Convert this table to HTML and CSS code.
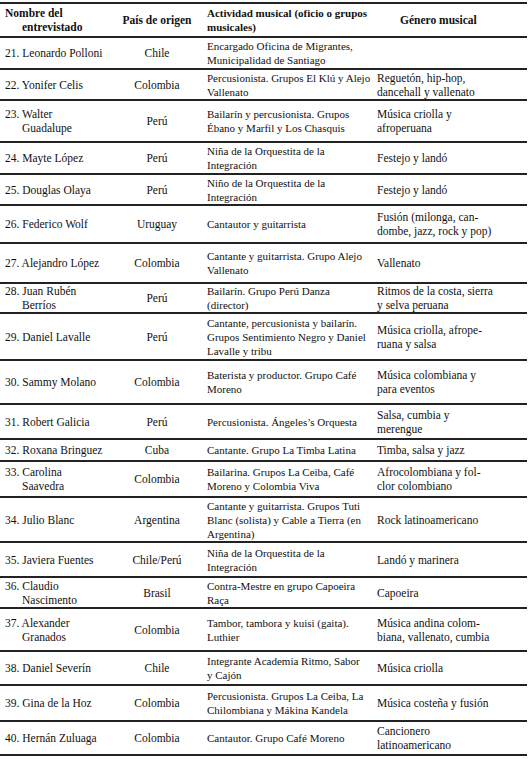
FILE: index.html
```html
<!DOCTYPE html>
<html lang="es">
<head>
<meta charset="utf-8">
<title>Entrevistados</title>
<link rel="stylesheet" href="styles.css">
</head>
<body>
<div class="table">
  <div class="row head h34">
    <div class="name">Nombre del<br>entrevistado</div>
    <div class="country">País de origen</div>
    <div class="act">Actividad musical (oficio o grupos<br>musicales)</div>
    <div class="genre genre-head">Género musical</div>
  </div>
  <div class="row h32">
    <div class="name">21. Leonardo Polloni</div>
    <div class="country">Chile</div>
    <div class="act">Encargado Oficina de Migrantes,<br>Municipalidad de Santiago</div>
    <div class="genre"></div>
  </div>
  <div class="row h31">
    <div class="name">22. Yonifer Celis</div>
    <div class="country">Colombia</div>
    <div class="act">Percusionista. Grupos El Klú y Alejo<br>Vallenato</div>
    <div class="genre">Reguetón, hip-hop,<br>dancehall y vallenato</div>
  </div>
  <div class="row h42">
    <div class="name">23. Walter<br>Guadalupe</div>
    <div class="country">Perú</div>
    <div class="act">Bailarín y percusionista. Grupos<br>Ébano y Marfil y Los Chasquis</div>
    <div class="genre">Música criolla y<br>afroperuana</div>
  </div>
  <div class="row h32">
    <div class="name">24. Mayte López</div>
    <div class="country">Perú</div>
    <div class="act">Niña de la Orquestita de la<br>Integración</div>
    <div class="genre">Festejo y landó</div>
  </div>
  <div class="row h31">
    <div class="name">25. Douglas Olaya</div>
    <div class="country">Perú</div>
    <div class="act">Niño de la Orquestita de la<br>Integración</div>
    <div class="genre">Festejo y landó</div>
  </div>
  <div class="row h38">
    <div class="name">26. Federico Wolf</div>
    <div class="country">Uruguay</div>
    <div class="act">Cantautor y guitarrista</div>
    <div class="genre">Fusión (milonga, can-<br>dombe, jazz, rock y pop)</div>
  </div>
  <div class="row h40">
    <div class="name">27. Alejandro López</div>
    <div class="country">Colombia</div>
    <div class="act">Cantante y guitarrista. Grupo Alejo<br>Vallenato</div>
    <div class="genre">Vallenato</div>
  </div>
  <div class="row h30">
    <div class="name">28. Juan Rubén<br>Berríos</div>
    <div class="country">Perú</div>
    <div class="act">Bailarín. Grupo Perú Danza<br>(director)</div>
    <div class="genre">Ritmos de la costa, sierra<br>y selva peruana</div>
  </div>
  <div class="row h47">
    <div class="name">29. Daniel Lavalle</div>
    <div class="country">Perú</div>
    <div class="act">Cantante, percusionista y bailarín.<br>Grupos Sentimiento Negro y Daniel<br>Lavalle y tribu</div>
    <div class="genre">Música criolla, afrope-<br>ruana y salsa</div>
  </div>
  <div class="row h44">
    <div class="name">30. Sammy Molano</div>
    <div class="country">Colombia</div>
    <div class="act">Baterista y productor. Grupo Café<br>Moreno</div>
    <div class="genre">Música colombiana y<br>para eventos</div>
  </div>
  <div class="row h35">
    <div class="name">31. Robert Galicia</div>
    <div class="country">Perú</div>
    <div class="act">Percusionista. Ángeles’s Orquesta</div>
    <div class="genre">Salsa, cumbia y<br>merengue</div>
  </div>
  <div class="row h22">
    <div class="name">32. Roxana Bringuez</div>
    <div class="country">Cuba</div>
    <div class="act">Cantante. Grupo La Timba Latina</div>
    <div class="genre">Timba, salsa y jazz</div>
  </div>
  <div class="row h36">
    <div class="name">33. Carolina<br>Saavedra</div>
    <div class="country">Colombia</div>
    <div class="act">Bailarina. Grupos La Ceiba, Café<br>Moreno y Colombia Viva</div>
    <div class="genre">Afrocolombiana y fol-<br>clor colombiano</div>
  </div>
  <div class="row h45">
    <div class="name">34. Julio Blanc</div>
    <div class="country">Argentina</div>
    <div class="act">Cantante y guitarrista. Grupos Tuti<br>Blanc (solista) y Cable a Tierra (en<br>Argentina)</div>
    <div class="genre">Rock latinoamericano</div>
  </div>
  <div class="row h35">
    <div class="name">35. Javiera Fuentes</div>
    <div class="country">Chile/Perú</div>
    <div class="act">Niña de la Orquestita de la<br>Integración</div>
    <div class="genre">Landó y marinera</div>
  </div>
  <div class="row h31">
    <div class="name">36. Claudio<br>Nascimento</div>
    <div class="country">Brasil</div>
    <div class="act">Contra-Mestre en grupo Capoeira<br>Raça</div>
    <div class="genre">Capoeira</div>
  </div>
  <div class="row h43">
    <div class="name">37. Alexander<br>Granados</div>
    <div class="country">Colombia</div>
    <div class="act">Tambor, tambora y kuisi (gaita).<br>Luthier</div>
    <div class="genre">Música andina colom-<br>biana, vallenato, cumbia</div>
  </div>
  <div class="row h34">
    <div class="name">38. Daniel Severín</div>
    <div class="country">Chile</div>
    <div class="act">Integrante Academia Ritmo, Sabor<br>y Cajón</div>
    <div class="genre">Música criolla</div>
  </div>
  <div class="row h36">
    <div class="name">39. Gina de la Hoz</div>
    <div class="country">Colombia</div>
    <div class="act">Percusionista. Grupos La Ceiba, La<br>Chilombiana y Mákina Kandela</div>
    <div class="genre">Música costeña y fusión</div>
  </div>
  <div class="row h34">
    <div class="name">40. Hernán Zuluaga</div>
    <div class="country">Colombia</div>
    <div class="act">Cantautor. Grupo Café Moreno</div>
    <div class="genre">Cancionero<br>latinoamericano</div>
  </div>
</div>
</body>
</html>
```

FILE: styles.css
```css
html, body {
  margin: 0;
  padding: 0;
  background: #ffffff;
}

body {
  font-family: "Liberation Serif", "Times New Roman", serif;
  font-size: 11.5px;
  line-height: 14px;
  color: #111111;
}

.table {
  width: 527px;
  margin-top: 2px;
  border-top: 2px solid #222;
}

.row {
  display: grid;
  grid-template-columns: 114px 86px 170px 157px;
  align-items: center;
  box-sizing: border-box;
  border-bottom: 2px solid #222;
}

.row > div {
  white-space: nowrap;
}

.head {
  font-weight: bold;
}

.name {
  padding-left: 22px;
  text-indent: -17px;
}

.country {
  text-align: center;
}

.act {
  padding-left: 7px;
  font-size: 11px;
}

.genre {
  padding-left: 7px;
}

.genre-head {
  padding-left: 30px;
}

.h22 { height: 22px; }
.h30 { height: 30px; }
.h31 { height: 31px; }
.h32 { height: 32px; }
.h34 { height: 34px; }
.h35 { height: 35px; }
.h36 { height: 36px; }
.h38 { height: 38px; }
.h40 { height: 40px; }
.h42 { height: 42px; }
.h43 { height: 43px; }
.h44 { height: 44px; }
.h45 { height: 45px; }
.h47 { height: 47px; }
```
